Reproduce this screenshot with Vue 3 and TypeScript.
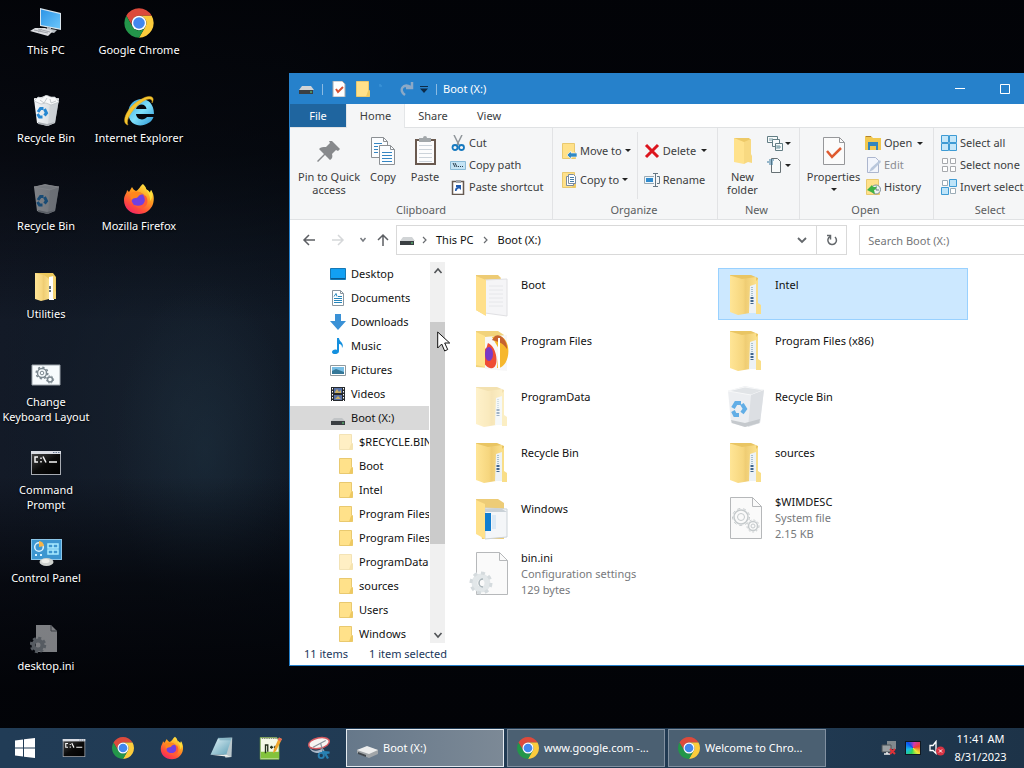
<script setup lang="ts">
import { ref } from 'vue'

interface DesktopItem { icon: string; label: string; dim?: boolean }
interface NavItem { icon: string; label: string; child?: boolean; faded?: boolean; current?: boolean }
interface FileItem { icon: string; name: string; meta?: string[]; faded?: boolean }

const desktopItems: DesktopItem[] = [
  { icon: 'pc', label: 'This PC' },
  { icon: 'bin-full', label: 'Recycle Bin' },
  { icon: 'bin', label: 'Recycle Bin', dim: true },
  { icon: 'folder-small', label: 'Utilities' },
  { icon: 'batch', label: 'Change\nKeyboard Layout' },
  { icon: 'cmd', label: 'Command\nPrompt' },
  { icon: 'control', label: 'Control Panel' },
  { icon: 'ini', label: 'desktop.ini', dim: true },
  { icon: 'chrome', label: 'Google Chrome' },
  { icon: 'ie', label: 'Internet Explorer' },
  { icon: 'firefox', label: 'Mozilla Firefox' },
]

const navItems: NavItem[] = [
  { icon: 'n-desktop', label: 'Desktop' },
  { icon: 'n-docs', label: 'Documents' },
  { icon: 'n-down', label: 'Downloads' },
  { icon: 'n-music', label: 'Music' },
  { icon: 'n-pics', label: 'Pictures' },
  { icon: 'n-video', label: 'Videos' },
  { icon: 'drive-nav', label: 'Boot (X:)', current: true },
  { icon: 'n-folder', label: '$RECYCLE.BIN', child: true, faded: true },
  { icon: 'n-folder', label: 'Boot', child: true },
  { icon: 'n-folder', label: 'Intel', child: true },
  { icon: 'n-folder', label: 'Program Files', child: true },
  { icon: 'n-folder', label: 'Program Files (x86)', child: true },
  { icon: 'n-folder', label: 'ProgramData', child: true, faded: true },
  { icon: 'n-folder', label: 'sources', child: true },
  { icon: 'n-folder', label: 'Users', child: true },
  { icon: 'n-folder', label: 'Windows', child: true },
]

const files: FileItem[] = [
  { icon: 'f-open', name: 'Boot' },
  { icon: 'f-full', name: 'Intel' },
  { icon: 'f-firefox', name: 'Program Files' },
  { icon: 'f-full', name: 'Program Files (x86)' },
  { icon: 'f-full', name: 'ProgramData', faded: true },
  { icon: 'bin', name: 'Recycle Bin' },
  { icon: 'f-full', name: 'Recycle Bin' },
  { icon: 'f-full', name: 'sources' },
  { icon: 'f-win', name: 'Windows' },
  { icon: 'f-sys', name: '$WIMDESC', meta: ['System file', '2.15 KB'] },
  { icon: 'f-ini', name: 'bin.ini', meta: ['Configuration settings', '129 bytes'] },
]

const pinned = [
  { icon: 'cmd', label: 'Command Prompt' },
  { icon: 'chrome', label: 'Google Chrome' },
  { icon: 'firefox', label: 'Mozilla Firefox' },
  { icon: 'notepad', label: 'Notepad' },
  { icon: 'notepadpp', label: 'Text editor' },
  { icon: 'snip', label: 'Snipping tool' },
]

const tasks = [
  { icon: 'drive-3d', label: 'Boot (X:)' },
  { icon: 'chrome', label: 'www.google.com -...' },
  { icon: 'chrome', label: 'Welcome to Chro...' },
]

const tabs = ['Home', 'Share', 'View']
const activeTab = ref('Home')
const selected = ref(1)
const activeTask = ref(0)
const query = ref('')
</script>

<template>
  <div class="screen">
    <svg class="defs" aria-hidden="true">
      <defs>
        <linearGradient id="g-screen" x1="0" y1="0" x2="1" y2="1"><stop offset="0" stop-color="#2c94e6" /><stop offset="1" stop-color="#6cc6fb" /></linearGradient>
        <linearGradient id="g-fire" x1=".8" y1="0" x2=".2" y2="1"><stop offset="0" stop-color="#fff04a" /><stop offset=".4" stop-color="#ff9a1f" /><stop offset=".75" stop-color="#ff4a3d" /><stop offset="1" stop-color="#f0206c" /></linearGradient>
        <linearGradient id="g-fold" x1="0" y1="0" x2="1" y2="0"><stop offset="0" stop-color="#ffe596" /><stop offset=".5" stop-color="#f6d67e" /><stop offset=".6" stop-color="#efcd74" /><stop offset="1" stop-color="#fbe08c" /></linearGradient>
        <linearGradient id="g-ie" x1="0" y1="0" x2="1" y2="1"><stop offset="0" stop-color="#2e9fe0" /><stop offset=".5" stop-color="#7fe0fa" /><stop offset="1" stop-color="#2a94d4" /></linearGradient>
        <linearGradient id="g-bin" x1="0" y1="0" x2="1" y2="0"><stop offset="0" stop-color="#f4f6f8" /><stop offset="1" stop-color="#cfd4d9" /></linearGradient>
        <linearGradient id="g-cmd" x1="0" y1="0" x2="1" y2="1"><stop offset="0" stop-color="#444" /><stop offset=".5" stop-color="#0a0a0a" /><stop offset="1" stop-color="#000" /></linearGradient>
        <linearGradient id="g-note" x1="0" y1="0" x2="1" y2="1"><stop offset="0" stop-color="#e2f2f6" /><stop offset="1" stop-color="#5d9fb6" /></linearGradient>
      </defs>
      <symbol id="pc" viewBox="0 0 32 32">
        <path d="M10 1 31 6v17l-21-4z" fill="#d8e4ec" /><path d="M11 2.500 30 7v14.500L11 18z" fill="url(#g-screen)" />
        <path d="M17 20l4 1v1l6 1-3 3-10-2 3-2z" fill="#b9bec4" /><path d="M5 21l10 0 8 3-5 5L0 24z" fill="#dcdde1" /><path d="M4 23l14 3m-10-4 12 3m-8-3-4 3" stroke="#a2a5ab" />
      </symbol>
      <symbol id="bin" viewBox="0 0 32 32">
        <path d="M4 4 15 1l14 3-4 24-8 3L7 28z" fill="url(#g-bin)" /><path d="M4 4 15 2l14 2-9 3z" fill="#dfe3e6" stroke="#f7f8f9" />
        <path d="M20 7 29 4l-4 24-7 3z" fill="#c6cbd0" opacity=".65" /><path d="M8 27l9 2 8-2-7 4-10-2z" fill="#a8adb2" />
        <g fill="none" stroke="#2587d2" stroke-width="3"><path d="m8 17 2.500-3.500 3 0" /><path d="m14.500 14 2 4-2 2.500" /><path d="m12.500 22h-3L7.500 19" /></g>
      </symbol>
      <symbol id="bin-full" viewBox="0 0 32 32">
        <use href="#bin" /><path d="m4 6 4-4 4 1 4-3 5 2 4 0 4 5-8 3-5-2-5 1z" fill="#f8f9fa" stroke="#b8bdc1" stroke-width=".7" /><path d="m10 5 4 3 3-5m3 1 1 4 5-2" stroke="#aeb3b8" fill="none" stroke-width=".7" />
      </symbol>
      <symbol id="bin-large" viewBox="0 0 48 48">
        <path d="M6 9 23 4l19 4-4 33-15 4-14-4z" fill="#eceef1" /><path d="M6 9 23 5l19 3-13 5z" fill="#e1e4e7" stroke="#f7f8f9" /><path d="M29 13 42 8l-4 33-12 4z" fill="#dcdfe3" /><path d="M9 38l14 3 15-4-1 4-14 4-13-4z" fill="#c5c9cd" />
        <g fill="none" stroke="#62aee6" stroke-width="4"><path d="m11 26 3-5 5 0" /><path d="m20 22 3 5-3 4" /><path d="m17 33h-4l-2-4" /></g>
      </symbol>
      <symbol id="folder-small" viewBox="0 0 32 32">
        <path d="M5 2h18l3 4v16H9z" fill="#edc95c" /><path d="M5 2 14 4l5 4v20l-8 2-6-2z" fill="url(#g-fold)" /><path d="M19 6l5-1v24h-5z" fill="#fff" /><path d="M20 15v3m0 1v2" stroke="#62727e" stroke-width="2" /><path d="M23 5h2v15l1 1v7h-3z" fill="#f5d475" />
      </symbol>
      <symbol id="batch" viewBox="0 0 32 32">
        <path d="M2 6h28v20H2z" fill="#f7fbfd" stroke="#9ca4ab" /><g fill="none" stroke="#7c8890"><circle cx="12" cy="14" r="4.500" stroke-width="1.500" /><circle cx="12" cy="14" r="5.800" stroke-dasharray="2.200 2.300" stroke-width="1.500" /><circle cx="12" cy="14" r="1.800" /><circle cx="20" cy="20.500" r="2.500" stroke-width="1.500" /><circle cx="20" cy="20.500" r="3.600" stroke-dasharray="1.600 1.400" /></g>
      </symbol>
      <symbol id="cmd" viewBox="0 0 32 32">
        <path d="M1 4h30v24H1z" fill="#a7abb2" /><path d="M2 7h28v20H2z" fill="url(#g-cmd)" /><path d="M1 4h30v3H1z" fill="#d9dce3" /><path d="M23 5.500h7" stroke="#63758d" stroke-dasharray="1.500 1" />
        <path d="M8 10H5v5h3M11 10.500v1.500m0 2v1.500M13 9.500l3 6M19 15h8" fill="none" stroke="#f6f6f6" stroke-width="1.500" />
      </symbol>
      <symbol id="control" viewBox="0 0 32 32">
        <path d="M1 4h31v21H1z" fill="#8bc5e8" /><path d="M2 5h29v19H2z" fill="#3d96d0" /><circle cx="9" cy="12" r="4.300" fill="none" stroke="#d8f0ff" stroke-width="1.500" /><path d="M9 12V6a6 6 0 0 1 5 5z" fill="#f6b447" /><path d="M18 9h10v4H18zM18 15h10v4H18zM23 9v4m0 2v4" fill="none" stroke="#a9ebff" stroke-width="1.500" /><path d="M5 20h2m3 0h2" stroke="#d7f2ff" stroke-width="2" /><ellipse cx="16.500" cy="27" rx="7" ry="4" fill="#cfd2cf" /><ellipse cx="15.500" cy="26" rx="4" ry="2" fill="#eff0eb" />
      </symbol>
      <symbol id="ini" viewBox="0 0 32 32">
        <path d="M6 2h15l6 6v21H6z" fill="#f4f6f8" /><path d="M21 2v6h6" fill="none" stroke="#72777d" /><circle cx="8" cy="22" r="4.500" fill="none" stroke="#a7b0b7" stroke-width="4" /><circle cx="8" cy="22" r="7" fill="none" stroke="#a7b0b7" stroke-width="2.500" stroke-dasharray="3 2.500" />
      </symbol>
      <symbol id="chrome" viewBox="0 0 48 48">
        <path d="M4.950 13A22 22 0 0 1 43.050 13H24a11 11 0 0 0-9.530 16.500z" fill="#dc4a3c" /><path d="M43.050 13A22 22 0 0 1 24 46l9.530-16.500A11 11 0 0 0 24 13z" fill="#fccc3c" /><path d="M24 46A22 22 0 0 1 4.950 13l9.520 16.500a11 11 0 0 0 19.060 0z" fill="#23964a" /><circle cx="24" cy="24" r="11" fill="#fff" /><circle cx="24" cy="24" r="8.700" fill="#4287ee" />
      </symbol>
      <symbol id="ie" viewBox="0 0 32 32">
        <path d="M31 19H13c.5 6 8 7 11 3h6.500c-3 10-23 13-25-2C3 1 31-3 31 19zM13 14h10.500c-.5-6-9-6-10.500 0z" fill="url(#g-ie)" /><path d="M5 30C-3 28 4 12 17 5c9-6 16-4 12 3 1-5-4-5-10-1C10 13 2 25 5 30z" fill="#f5c630" stroke="#dfa71c" stroke-width=".5" />
      </symbol>
      <symbol id="firefox" viewBox="0 0 32 32">
        <path d="M20 1c2 2 3 3.500 3.500 6 2.500 1 3.500 3 3.500 3l1-3c3 4 3.500 9 2 14-2 6-7.500 10-14 10C7 31 1 25 1 17c0-5 3-7 3-10l2 2 3-5c1 2 2 3 4 4 3-1 4-5 7-7z" fill="url(#g-fire)" /><circle cx="15.500" cy="16.500" r="7" fill="#7140e1" /><path d="M8 10c5-3 10-1 13 2-3-1-5 0-6 2-2 2-6 0-6 4-2-3-2-6-1-8z" fill="#ff861d" /><path d="M20 12c5 7-1 13-9 10 8 8 17 0 12-9z" fill="#ff5a38" /><path d="M21 2c1 5 7 9 6 16 4-5 2-9 1-11l-1 3c-1-3-3-3-4-4z" fill="#ffdf3a" />
      </symbol>
      <symbol id="notepad" viewBox="0 0 32 32">
        <path d="m12 3 19-1-1 26-8 1z" fill="#b9c7cc" /><path d="M12 3h18l-7 22H2z" fill="url(#g-note)" /><path d="m23 25 6 3-27-3z" fill="#f1f1ed" /><path d="M12 3h18M14 5h15" stroke="#6ba3b6" />
      </symbol>
      <symbol id="notepadpp" viewBox="0 0 32 32">
        <path d="M3 2h22l3 4v25H3z" fill="#f5f9e7" stroke="#77ad3b" /><path d="M4 21h24v9H4z" fill="#83c33c" /><path d="M5 3h20" stroke="#889078" stroke-width="2" stroke-dasharray="2 1" /><path d="M10 23V11m0 1h3v9m3-6h4m1 0h4m-7-2v4m5-4v4" fill="none" stroke="#24301b" stroke-width="1.800" /><path d="m28 2 4 2-8 16-4 3 1-5z" fill="#f0a62b" /><path d="m28 2 4 2-2 3-4-2z" fill="#e7665a" />
      </symbol>
      <symbol id="snip" viewBox="0 0 32 32">
        <path d="M3 15c4 6 12 6 18 1l3 5c-8 3-18 3-21-6z" fill="#aab6c6" /><ellipse cx="16" cy="9.500" rx="14" ry="7" fill="#f7f5f2" stroke="#d4585f" stroke-width="2" transform="rotate(-12 16 9.500)" /><path d="M8 15 25 6M18 9l3 11" stroke="#8a929a" stroke-width="1.500" /><circle cx="19" cy="26" r="3.500" fill="none" stroke="#2880b2" stroke-width="2.500" /><path d="m20 21 10 1-6 1 4 7" fill="none" stroke="#2880b2" stroke-width="3" />
      </symbol>
      <symbol id="drive-3d" viewBox="0 0 24 24">
        <path d="m2 14 10-3 11 3v4l-9 4-12-5z" fill="#a1a5a8" /><path d="m2 14 10-4 11 4-9 4z" fill="#eceded" /><path d="m3 16 8 3v2l-8-3z" fill="#41474c" />
      </symbol>
      <symbol id="drive" viewBox="0 0 16 16"><path d="M4 5h9l3 4H1z" fill="#d1d4d6" /><path d="M1 9h14v4H1z" fill="#3b3f43" /><path d="M12 11h2" stroke="#62df7e" /></symbol>
      <symbol id="drive-nav" viewBox="0 0 16 16"><path d="M4 8h8l3 3H1z" fill="#c1c4c6" /><path d="M1 11h14v4H1z" fill="#3b3f43" /><path d="M12 13h2" stroke="#62df7e" /></symbol>
      <symbol id="check-page" viewBox="0 0 16 16"><path d="M2 0h9l3 3v13H2z" fill="#fff" stroke="#a8a9ad" /><path d="m5 8 2 3 5-5" fill="none" stroke="#d85132" stroke-width="2" /></symbol>
      <symbol id="n-folder" viewBox="0 0 16 16"><path d="M1.500.500h12V9l1 1v5.500h-13z" fill="#ffe18a" stroke="#e9c96f" /><path d="M13 10l1.500-1v6.500H11z" fill="#eec961" /></symbol>
      <symbol id="n-desktop" viewBox="0 0 16 16"><path d="M.5 2.500h15v11H.5z" fill="#12a0f3" stroke="#1678b4" /><path d="M1 12.500h14" stroke="#0b5a90" /></symbol>
      <symbol id="n-docs" viewBox="0 0 16 16"><path d="M2.500.500h8l3 3v12h-11z" fill="#fff" stroke="#8a969f" /><path d="M4 8.500h8M4 10.500h8M4 12.500h8M8 6.500h4M4 6.500l2-3 1 3" fill="none" stroke="#2786bb" /><path d="M10.500.500v3h3" fill="none" stroke="#8a969f" /></symbol>
      <symbol id="n-down" viewBox="0 0 16 16"><path d="M5 0h6v7h5l-8 9-8-9h5z" fill="#3a91d6" /></symbol>
      <symbol id="n-music" viewBox="0 0 16 16"><path d="M7 0h2c0 4 6 5 3 10 0-3-1-4-3-4v7c0 4-7 4-7 1 0-2 3-3 5-2z" fill="#1490df" /></symbol>
      <symbol id="n-pics" viewBox="0 0 16 16"><path d="M.5 3.500h15v10H.5z" fill="#fff" stroke="#8f999e" /><path d="M2 5h12v7H2z" fill="#78bee5" /><path d="m2 9 4-2 8 3v2H2z" fill="#347798" /></symbol>
      <symbol id="n-video" viewBox="0 0 16 16"><path d="M1 1h14v14H1z" fill="#25292d" /><path d="M4 2h8v5H4zM4 9h8v5H4z" fill="#5972a7" /><path d="m5 6 2-3 2 3 2-2v3H5zm0 7 3-3 3 3z" fill="#c9b067" /><path d="M2.500 2v13m11-13v13" stroke="#fff" stroke-dasharray="1.500 1.500" /></symbol>
      <symbol id="f-full" viewBox="0 0 48 48"><path d="M8 5h21l7 3v30H9z" fill="#e9c563" /><path d="M8 5.500 20 9l14-2v35l-18 3-8-3z" fill="url(#g-fold)" /><path d="m28 16 6-2v29h-7z" fill="#edf2f5" /><path d="M30 17v12" stroke="#a8c0cf" stroke-width="2" stroke-dasharray="1 1" /><path d="M30 27v7" stroke="#42678f" stroke-width="3" stroke-dasharray="2 1" /><path d="M34 11l2-2v24l3 2v9h-5z" fill="#f9de88" /></symbol>
      <symbol id="f-open" viewBox="0 0 48 48"><path d="M8 5h22l3 3-16 37-9-5z" fill="#edcb74" /><path d="m17 10 22-1v37l-22-3z" fill="#f5f5f7" stroke="#e0e0e3" /><path d="M21 16h14m-14 4h14m-14 4h14m-14 4h14m-14 4h14m-14 4h14" stroke="#e6e7ea" /><path d="M8 6l10 4v36L8 40z" fill="#ffe08b" /></symbol>
      <symbol id="f-firefox" viewBox="0 0 48 48"><path d="M8 5h22l6 4v34l-28-2z" fill="#f1d27a" /><path d="m17 11 22-2v36l-22-2z" fill="#f7f7f7" /><path d="M24 11c22-8 20 32 5 31l2-19z" fill="#f6b72d" /><path d="M27 10c8-4 13 9 12 13-4-7-12-8-15-9z" fill="#c66230" /><path d="M18 22c1 0 1-3 2-5 10 4 12 28 2 25-8-2-9-15-4-20z" fill="#ee4c34" /><ellipse cx="21" cy="28" rx="4" ry="7" fill="#793ac7" /><path d="M8 6l9 4v31l-9-2z" fill="#ffe38d" /><path d="M31 12v31" stroke="#fff" stroke-width="2" /></symbol>
      <symbol id="f-win" viewBox="0 0 48 48"><path d="M8 5h22l6 4v36H14z" fill="#edcc77" /><path d="m17 14 22 1v28l-22 2z" fill="#f4f6f8" stroke="#ccd3d8" /><path d="M17 15h17l5 3H17z" fill="#c9d1d7" /><path d="M17 19h6v18h-6z" fill="#127ed0" /><path d="M24 21h4v14h-4z" fill="#dbe9f5" /><path d="M8 6l9 4v35l-9-5z" fill="#ffe18b" /></symbol>
      <symbol id="f-sys" viewBox="0 0 48 48"><path d="M8.500 3.500h22l9 9v32h-31z" fill="#fafafa" stroke="#b6b8ba" /><path d="M30.500 3.500v9h9" fill="none" stroke="#b6b8ba" /><g fill="none" stroke="#c5cacc"><circle cx="19" cy="23" r="7" stroke-width="1.500" /><circle cx="19" cy="23" r="3.500" /><circle cx="19" cy="23" r="8.500" stroke-dasharray="3 3" /><circle cx="31" cy="32" r="4.500" stroke-width="1.500" /><circle cx="31" cy="32" r="2" /><circle cx="31" cy="32" r="6" stroke-dasharray="2 2" /></g></symbol>
      <symbol id="f-ini" viewBox="0 0 48 48"><path d="M8.500 2.500h23l8 8v34h-31z" fill="#fafafa" stroke="#b6b8ba" /><path d="M31.500 2.500v8h8" fill="none" stroke="#b6b8ba" /><circle cx="13" cy="33" r="6.500" fill="none" stroke="#e2e7e9" stroke-width="6" /><circle cx="13" cy="33" r="10" fill="none" stroke="#d5dbde" stroke-width="3" stroke-dasharray="4 3.800" /><path d="M15 29a4 4 0 1 0 0 8" fill="none" stroke="#a9b4b9" stroke-width="1.500" /></symbol>
      <symbol id="pin" viewBox="0 0 32 32"><path d="m19 5 8 8-2 2-2-1-4 4c1 3 0 5-2 6l-5-5-7 7-1-1 7-7-5-5c2-2 4-2 7-2l4-4-1-2z" fill="#87898c" /></symbol>
      <symbol id="copy" viewBox="0 0 32 32"><g fill="#fbfdff" stroke="#8c9094"><path d="M4.500 1.500h12l4 4v16h-16z" /><path d="M12.500 9.500h11l4 4v15h-15z" /><path d="M16.500 1.500v4h4M23.500 9.500v4h4" fill="none" /></g><path d="M7 7.500h8M7 10.500h4M7 13.500h4M7 16.500h4M15 16.500h10M15 19.500h10M15 22.500h10M15 25.500h10" stroke="#3485c2" /></symbol>
      <symbol id="paste" viewBox="0 0 32 32"><path d="M7 4h19v24H7z" fill="#fcfcfd" stroke="#69594f" stroke-width="2" /><path d="M10 9.500h13m-13 4h13m-13 4h13m-13 4h13m-13 4h13" stroke="#ccd3da" /><path d="M10 2h4a2 2 0 0 1 4 0h4v4H10z" fill="#a2a7aa" /></symbol>
      <symbol id="cut" viewBox="0 0 16 16"><path d="m4 0 5 10M12 0 7 10" stroke="#90969b" stroke-width="1.500" /><g fill="none" stroke="#1679bf" stroke-width="1.800"><circle cx="5" cy="12.500" r="2.500" /><circle cx="11.500" cy="12.500" r="2.500" /></g></symbol>
      <symbol id="copypath" viewBox="0 0 16 16"><path d="M.5 4.500h15v8H.5z" fill="#c4e3f4" stroke="#8abbd7" /><path d="m3 6 2 4m0-4 2 4m1-.5h1m1 0h1m1 0h1" fill="none" stroke="#273b4b" /></symbol>
      <symbol id="pasteshort" viewBox="0 0 16 16"><path d="M2.500 2.500h11v13h-11z" fill="#fff" stroke="#665a51" stroke-width="1.500" /><path d="M6 1h5v3H6z" fill="#a2a4a7" /><path d="M5 12c0-3 1-4 3-4H6V6h5v5L9.500 9.500C8 9.500 7 10 6.500 12z" fill="#205bb0" /></symbol>
      <symbol id="moveto" viewBox="0 0 16 16"><use href="#n-folder" /><path d="m6 12 4-4v2h6v4h-6v2z" fill="#3289c4" stroke="#fff" stroke-width=".6" /></symbol>
      <symbol id="copyto" viewBox="0 0 16 16"><use href="#n-folder" /><path d="M5.500 4.500h5l2 2v7h-7z" fill="#fff" stroke="#7a8ba0" /><path d="M7.500 2.500h5l2 2v7h-7z" fill="#fff" stroke="#7a8ba0" /><path d="M9 5.500h4m-4 2h4m-4 2h4" stroke="#467da8" /></symbol>
      <symbol id="delete" viewBox="0 0 16 16"><path d="m2 2 12 12M14 2 2 14" stroke="#dc151e" stroke-width="3" /></symbol>
      <symbol id="rename" viewBox="0 0 16 16"><path d="M10 4.500H.500v7H10" fill="#eff7fc" stroke="#9aa9b3" /><path d="M2 6h7v4H2z" fill="#318bce" /><path d="M13 4.500h2.500v7H13M9 1.500h5m-5 13h5m-2.500-13v13" fill="none" stroke="#657683" /></symbol>
      <symbol id="new-folder" viewBox="0 0 32 32"><path d="M7 2h15l2 2v22H9z" fill="#edc967" /><path d="M7 2l10 4v22L7 26z" fill="#ffe28c" /><path d="m17 6 7-3v15l1 2v7l-4-1-4 2z" fill="#f8d981" /></symbol>
      <symbol id="newitem" viewBox="0 0 16 16"><g fill="#f8fbfb" stroke="#627d84"><path d="M.5 1.500h10v6H.5z" /><path d="M5.500 4.500h7v7h-7z" /><path d="M8.500 8.500h7v7h-7z" /></g><path d="M3 3v3m2-3v3m5 4v4m2-4v4m-2-2h4" stroke="#759aa4" /></symbol>
      <symbol id="easy" viewBox="0 0 16 16"><path d="M4.500 1.500h6l3 3v11h-9z" fill="#f8fafa" stroke="#667074" /><path d="M2 3h5M0 5h6M2 7h4" stroke="#38789d" /></symbol>
      <symbol id="properties" viewBox="0 0 32 32"><path d="M5.500 1.500h16l5 5v22h-21z" fill="#fbfbfb" stroke="#96979a" /><path d="M21.500 1.500v5h5" fill="none" stroke="#96979a" /><path d="m9 15 5 6 9-9" fill="none" stroke="#df5b30" stroke-width="2.500" /></symbol>
      <symbol id="open" viewBox="0 0 16 16"><path d="M0 1h6l2 2h8v12H0z" fill="#f1c84f" /><path d="M1 1h5v1H1z" fill="#b1812f" /><path d="M3 7h10v8h-2v-4H5v4H3z" fill="#3285bc" /></symbol>
      <symbol id="edit" viewBox="0 0 16 16"><path d="M2.500.500h8l3 3v12h-11z" fill="#f2f5fc" stroke="#acb6ce" /><path d="m4 15 2-4L15 3l1 2-8 8z" fill="#b9c7dc" /></symbol>
      <symbol id="history" viewBox="0 0 16 16"><use href="#n-folder" /><circle cx="11" cy="10.500" r="4.500" fill="#eef1f2" stroke="#7f8f95" /><path d="M11 8v3h3" fill="none" stroke="#6b8187" /><path d="M2 11 7 6l1 2c2 0 3 0 4-1-1 4-3 4-3 4l1 4z" fill="#3fb144" /></symbol>
      <symbol id="select-all" viewBox="0 0 16 16"><path d="M.5.500h7v7h-7zm8 0h7v7h-7zm-8 8h7v7h-7zm8 0h7v7h-7z" fill="#c5e7f9" stroke="#3e9bd4" /></symbol>
      <symbol id="select-none" viewBox="0 0 16 16"><path d="M1.500 1.500h5v5h-5zm8 0h5v5h-5zm-8 8h5v5h-5zm8 0h5v5h-5z" fill="#fff" stroke="#a6a9ad" /></symbol>
      <symbol id="invert" viewBox="0 0 16 16"><path d="M1.500 1.500h5v5h-5zm8 8h5v5h-5z" fill="#fff" stroke="#9bacb7" /><path d="M8.500.500h7v7h-7zm-8 8h7v7h-7z" fill="#bee4f9" stroke="#3e9bd4" /></symbol>
    </svg>

    <main class="desktop">
      <ul class="shortcuts">
        <li v-for="(d, i) in desktopItems" :key="i">
          <button class="shortcut">
            <svg :class="{ dim: d.dim }"><use :href="'#' + d.icon" /></svg>
            <span>{{ d.label }}</span>
          </button>
        </li>
      </ul>

      <section class="window" aria-label="Boot (X:)">
        <header class="titlebar">
          <svg class="s16"><use href="#drive" /></svg>
          <i class="bar"></i>
          <button class="quick" aria-label="Properties"><svg class="s16"><use href="#check-page" /></svg></button>
          <button class="quick" aria-label="New folder"><svg class="s16"><use href="#n-folder" /></svg></button>
          <button class="quick undo" aria-label="Undo"><svg class="s16" viewBox="0 0 16 16"><path d="M3 3v2h2" fill="none" stroke="#3a92d8" stroke-width="1.500" /></svg></button>
          <button class="quick redo" aria-label="Redo"><svg class="s16" viewBox="0 0 16 16"><path d="M6 14C-1 9 4 2 12 6M13 1v6H7" fill="none" stroke="#8ba9c7" stroke-width="2.500" /></svg></button>
          <button class="quick more" aria-label="Customize toolbar"><svg viewBox="0 0 8 8"><path d="M0 1.500h8" stroke="#0d2b48" /><path d="M0 3.500h8L4 8z" fill="#0d2b48" /></svg></button>
          <i class="bar"></i>
          <h1>Boot (X:)</h1>
          <button class="caption" aria-label="Minimize"><svg viewBox="0 0 10 10"><path d="M0 4.500h10" stroke="#fff" /></svg></button>
          <button class="caption" aria-label="Maximize"><svg viewBox="0 0 10 10"><path d="M.5.500h9v9h-9z" fill="none" stroke="#fff" /></svg></button>
        </header>

        <nav class="tabs">
          <button class="file">File</button>
          <button v-for="t in tabs" :key="t" :class="{ active: t === activeTab }" @click="activeTab = t">{{ t }}</button>
        </nav>

        <div class="ribbon">
          <div class="group clipboard">
            <div class="tools">
              <button class="big pin"><svg><use href="#pin" /></svg><span>Pin to Quick access</span></button>
              <button class="big copy"><svg><use href="#copy" /></svg><span>Copy</span></button>
              <button class="big paste"><svg><use href="#paste" /></svg><span>Paste</span></button>
              <div class="stack">
                <button><svg><use href="#cut" /></svg>Cut</button>
                <button><svg><use href="#copypath" /></svg>Copy path</button>
                <button><svg><use href="#pasteshort" /></svg>Paste shortcut</button>
              </div>
            </div>
            <p>Clipboard</p>
          </div>
          <div class="group organize">
            <div class="tools">
              <div class="stack roomy">
                <button><svg><use href="#moveto" /></svg>Move to<i class="caret"></i></button>
                <button><svg><use href="#copyto" /></svg>Copy to<i class="caret"></i></button>
              </div>
              <div class="stack roomy split">
                <button><svg><use href="#delete" /></svg>Delete<i class="caret wide"></i></button>
                <button><svg><use href="#rename" /></svg>Rename</button>
              </div>
            </div>
            <p>Organize</p>
          </div>
          <div class="group new">
            <div class="tools">
              <button class="big newf"><svg><use href="#new-folder" /></svg><span>New folder</span></button>
              <div class="stack tight">
                <button aria-label="New item"><svg><use href="#newitem" /></svg><i class="caret"></i></button>
                <button aria-label="Easy access"><svg><use href="#easy" /></svg><i class="caret"></i></button>
              </div>
            </div>
            <p>New</p>
          </div>
          <div class="group open">
            <div class="tools">
              <button class="big props"><svg><use href="#properties" /></svg><span>Properties</span><i class="caret"></i></button>
              <div class="stack">
                <button><svg><use href="#open" /></svg>Open<i class="caret wide"></i></button>
                <button class="off" disabled><svg><use href="#edit" /></svg>Edit</button>
                <button><svg><use href="#history" /></svg>History</button>
              </div>
            </div>
            <p>Open</p>
          </div>
          <div class="group select">
            <div class="tools">
              <div class="stack">
                <button><svg><use href="#select-all" /></svg>Select all</button>
                <button><svg><use href="#select-none" /></svg>Select none</button>
                <button><svg><use href="#invert" /></svg>Invert selection</button>
              </div>
            </div>
            <p>Select</p>
          </div>
        </div>

        <div class="address">
          <button aria-label="Back"><svg class="s16" viewBox="0 0 16 16"><path d="M14 8H3m5-5L3 8l5 5" fill="none" stroke="#5c5f63" stroke-width="1.500" /></svg></button>
          <button aria-label="Forward"><svg class="s16" viewBox="0 0 16 16"><path d="M2 8h11M8 3l5 5-5 5" fill="none" stroke="#d5d7d9" stroke-width="1.500" /></svg></button>
          <button class="narrow" aria-label="Recent"><svg viewBox="0 0 8 8"><path d="m1.500 2 2.500 3L6.500 2" fill="none" stroke="#777b80" stroke-width="1.500" /></svg></button>
          <button class="up" aria-label="Up"><svg class="s16" viewBox="0 0 16 16"><path d="M8 14V3M3 8l5-5 5 5" fill="none" stroke="#5c5f63" stroke-width="1.500" /></svg></button>
          <div class="path">
            <svg class="s16"><use href="#drive" /></svg>
            <svg class="sep" viewBox="0 0 8 8"><path d="m2 1 3 3-3 3" fill="none" stroke="#696c70" stroke-width="1.200" /></svg>
            <a href="#">This PC</a>
            <svg class="sep second" viewBox="0 0 8 8"><path d="m2 1 3 3-3 3" fill="none" stroke="#696c70" stroke-width="1.200" /></svg>
            <a href="#">Boot (X:)</a>
            <button class="drop" aria-label="Previous locations"><svg viewBox="0 0 10 10"><path d="m1 3 4 4 4-4" fill="none" stroke="#63676b" stroke-width="1.800" /></svg></button>
            <button class="reload" aria-label="Refresh"><svg viewBox="0 0 14 14"><path d="M5 3.500A4.300 4.300 0 1 0 10 4" fill="none" stroke="#63676b" stroke-width="1.500" /><path d="M5.500 6.500V2.500H2" fill="none" stroke="#63676b" stroke-width="1.500" /></svg></button>
          </div>
          <input v-model="query" class="search" type="search" aria-label="Search Boot (X:)" placeholder="Search Boot (X:)">
        </div>

        <div class="panes">
          <nav class="tree">
            <ul>
              <li v-for="(n, i) in navItems" :key="i">
                <a href="#" :class="{ child: n.child, current: n.current }">
                  <svg class="s16" :class="{ faded: n.faded }"><use :href="'#' + n.icon" /></svg>{{ n.label }}
                </a>
              </li>
            </ul>
          </nav>
          <div class="scroll">
            <button aria-label="Scroll up"><svg viewBox="0 0 10 10"><path d="m1.500 7 3.500-4 3.500 4" fill="none" stroke="#505356" stroke-width="1.600" /></svg></button>
            <div class="track"><div class="thumb"></div></div>
            <button aria-label="Scroll down"><svg viewBox="0 0 10 10"><path d="m1.500 3 3.500 4 3.500-4" fill="none" stroke="#505356" stroke-width="1.600" /></svg></button>
          </div>
          <div class="files">
            <button v-for="(f, i) in files" :key="i" class="item" :class="{ chosen: i === selected }" @click="selected = i">
              <svg :class="{ faded: f.faded }"><use :href="f.icon === 'bin' ? '#bin-large' : '#' + f.icon" /></svg>
              <span class="info"><span>{{ f.name }}</span><small v-for="m in f.meta" :key="m">{{ m }}</small></span>
            </button>
          </div>
        </div>

        <footer class="status"><span>{{ files.length }} items</span><span>1 item selected</span></footer>
      </section>

      <svg class="pointer" viewBox="0 0 13 21" aria-hidden="true"><path d="M.7 1v16l4-4 3 7 3-1.500-3-6.500h5z" fill="#fff" stroke="#111" /></svg>
    </main>

    <footer class="taskbar">
      <button class="start" aria-label="Start"><svg viewBox="0 0 20 20"><path d="m0 2.500 8-1v8H0zm9-1.200L20 0v9.500H9zM0 10.500h8v8l-8-1zm9 0h11V20L9 18.700z" fill="#fff" /></svg></button>
      <button v-for="p in pinned" :key="p.label" class="app" :aria-label="p.label"><svg><use :href="'#' + p.icon" /></svg></button>
      <div class="tasks">
        <button v-for="(t, i) in tasks" :key="t.label" :class="{ active: i === activeTask }" @click="activeTask = i"><svg><use :href="'#' + t.icon" /></svg><span>{{ t.label }}</span></button>
      </div>
      <div class="tray">
        <svg viewBox="0 0 16 16"><path d="M6 1h9v8H6z" fill="#82898e" /><path d="M1 5h9v7H1z" fill="#9ba0a2" stroke="#4d5357" /><path d="M3 14h6M6 12v2" stroke="#eef0f1" stroke-width="1.500" /><path d="m9 9 5 5m0-5-5 5" stroke="#de3238" stroke-width="2" /></svg>
        <i class="palette"></i>
        <svg viewBox="0 0 16 16"><path d="M1 5.500h3l3-4v12l-3-3H1z" fill="none" stroke="#fff" stroke-width="1.300" /><circle cx="11.500" cy="11" r="4.500" fill="#d73343" /><path d="m10 9.500 3 3m0-3-3 3" stroke="#fff" /></svg>
      </div>
      <time><span>11:41 AM</span><span>8/31/2023</span></time>
    </footer>
  </div>
</template>

<style>
html, body { margin: 0; overflow: hidden; }
</style>

<style scoped>
* { box-sizing: border-box; }
.screen {
  display: flex; flex-direction: column; height: 100vh; overflow: hidden;
  font: 11px/16px "Noto Sans", "Open Sans", sans-serif; color: #111;
  background:
    linear-gradient(180deg, rgba(2, 3, 7, .95) 0, rgba(2, 3, 7, .7) 20%, rgba(2, 3, 7, 0) 42%, rgba(2, 3, 7, 0) 62%, rgba(2, 3, 7, .7) 76%, rgba(2, 3, 7, .97) 90%),
    radial-gradient(ellipse 90px 170px at 205px 450px, rgba(32, 54, 70, .4), rgba(32, 54, 70, 0)),
    radial-gradient(ellipse 240px 300px at 180px 410px, rgba(24, 35, 48, .8), rgba(19, 29, 42, .5) 55%, rgba(6, 9, 16, 0)),
    linear-gradient(90deg, #131926, #0d1520 28%, #03060c 40%, #03060c);
}
.defs { position: absolute; width: 0; height: 0; }
button { font: inherit; color: inherit; border: 0; background: none; padding: 0; margin: 0; }
ul { list-style: none; margin: 0; padding: 0; }
a { color: inherit; text-decoration: none; }
svg { display: block; flex: none; }
.s16 { width: 16px; height: 16px; }
.faded { opacity: .5; }
.desktop { position: relative; flex: 1; min-height: 0; }

.shortcuts { display: grid; grid-auto-flow: column; grid-template-rows: repeat(8, 88px); grid-auto-columns: 92px; column-gap: 1px; justify-content: start; }
.shortcut { display: flex; flex-direction: column; align-items: center; gap: 3px; width: 100%; padding-top: 7px; color: #fff; line-height: 15px; text-shadow: 0 1px 2px #000; white-space: pre-line; }
.shortcut svg { width: 32px; height: 32px; }
.shortcut .dim { opacity: .5; }

.window { position: absolute; left: 289px; right: -49px; top: 73px; bottom: 62px; display: flex; flex-direction: column; background: #fff; border: 1px solid #2681cb; }
.titlebar { display: flex; align-items: center; height: 30px; padding: 0 44px 0 8px; gap: 8px; background: #2681cb; color: #fff; flex: none; }
.bar { width: 1px; height: 11px; background: #8bbbe3; }
.titlebar h1 { flex: 1; margin: 0 0 0 -2px; font: inherit; }
.undo, .redo { margin-left: -2px; }
.more { margin: 0 0 0 -3px; }
.more svg { width: 8px; height: 8px; }
.caption { width: 46px; height: 30px; display: grid; place-items: center; }
.caption + .caption { margin-left: -9px; }
.caption svg { width: 10px; height: 10px; }

.tabs { display: flex; height: 23px; flex: none; color: #3b3d40; }
.tabs button { width: 56px; height: 24px; }
.tabs .file { background: #1f659f; color: #fff; height: 23px; }
.tabs .active { width: 59px; background: #f5f6f7; border: solid #e4e6e8; border-width: 0 1px; position: relative; }

.ribbon { display: flex; height: 93px; flex: none; background: #f5f6f7; border: solid #e0e2e4; border-width: 1px 0; color: #3c3d40; }
.group { display: flex; flex-direction: column; justify-content: space-between; padding-top: 4px; border-right: 1px solid #e2e3e5; flex: none; }
.group p { margin: 0; text-align: center; line-height: 18px; color: #5b5d60; }
.clipboard { width: 263px; padding-left: 4px; }
.clipboard p { margin-left: -4px; }
.organize { width: 165px; padding-left: 8px; }
.organize p { margin-left: -10px; }
.new { width: 82px; padding-left: 2px; }
.new p { margin-left: -6px; }
.open { width: 134px; padding-left: 4px; }
.open p { margin-left: -6px; }
.select { width: 113px; padding-left: 7px; }
.select p { margin-left: -7px; }
.tools { display: flex; height: 67px; }
.big { display: flex; flex-direction: column; align-items: center; padding-top: 4px; gap: 2px; line-height: 13px; }
.big svg { width: 32px; height: 32px; }
.pin { width: 70px; }
.copy { width: 38px; }
.paste { width: 46px; }
.newf { width: 45px; }
.newf span { width: 36px; }
.props { width: 59px; }
.props .caret { margin-top: 3px; }
.caret { border: 3px solid transparent; border-top-color: #222; border-bottom: 0; }
.wide { margin-left: 2px; }
.stack { display: flex; flex-direction: column; padding-left: 2px; }
.stack button { display: flex; align-items: center; gap: 3px; height: 22px; white-space: nowrap; }
.stack svg { width: 16px; height: 16px; }
.tight button { gap: 2px; }
.roomy { padding: 4px 0 0; }
.roomy button { height: 29px; }
.split { margin: 0 0 0 6px; padding-left: 6px; border-left: 1px solid #e2e3e5; }
.off { color: #8b8d92; }
.select .stack { padding-left: 0; }

.address { display: flex; align-items: center; height: 42px; flex: none; padding: 0 12px 2px 11px; }
.address > button { width: 29px; display: grid; justify-items: start; }
.address > .narrow { width: 16px; }
.address > .narrow svg { width: 8px; height: 8px; }
.address > .up { width: 21px; }
.path { display: flex; align-items: center; flex: 448 1 0; min-width: 0; height: 30px; border: 1px solid #d9d9d9; padding-left: 2px; }
.sep { width: 8px; height: 8px; margin: 0 7px 0 6px; }
.second { margin: 0 8px; }
.drop { margin-left: auto; width: 29px; height: 28px; display: grid; place-items: center; border-right: 1px solid #d9d9d9; }
.drop svg { width: 10px; height: 10px; }
.reload { width: 29px; height: 28px; display: grid; place-items: center; }
.reload svg { width: 14px; height: 14px; }
.search { flex: 183 1 0; min-width: 0; height: 30px; margin-left: 12px; border: 1px solid #d9d9d9; padding: 0 8px; font: inherit; background: #fff; }
.search::placeholder { color: #757679; opacity: 1; }

.panes { display: flex; flex: 1; min-height: 0; }
.tree { width: 139px; overflow: hidden; flex: none; }
.tree a { display: flex; align-items: center; gap: 5px; height: 24px; padding-left: 40px; white-space: nowrap; }
.tree .child { padding-left: 48px; }
.tree .current { background: #d9d9d9; }
.scroll { display: flex; flex-direction: column; width: 15px; margin-left: 1px; flex: none; background: #f0f0f0; }
.scroll button { height: 17px; display: grid; place-items: center; }
.scroll svg { width: 10px; height: 10px; }
.track { flex: 1; display: flex; flex-direction: column; }
.thumb { height: 64%; margin-top: 43px; background: #cbcbcb; }
.files { display: grid; grid-template-columns: 250px 250px; grid-auto-rows: 52px; gap: 4px; padding: 6px 0 0 19px; align-content: start; }
.item { display: flex; align-items: center; gap: 5px; padding-left: 3px; text-align: left; border: 1px solid transparent; }
.item.chosen { background: #cce8ff; border-color: #99d1ff; }
.item svg { width: 48px; height: 48px; }
.info { display: flex; flex-direction: column; min-height: 34px; }
.info small { font-size: 11px; color: #77797c; }
.status { display: flex; gap: 21px; height: 22px; flex: none; padding-left: 14px; line-height: 21px; color: #20365a; }
.pointer { position: absolute; left: 437px; top: 331px; width: 13px; height: 21px; }

.taskbar { display: flex; align-items: stretch; height: 40px; flex: none; background: linear-gradient(90deg, #213c56, #203951 80%, #1d3348); color: #fff; }
.start { width: 49px; display: grid; place-items: center; }
.start svg { width: 20px; height: 20px; }
.app { width: 49px; display: grid; place-items: center; }
.app svg { width: 24px; height: 24px; }
.tasks { display: flex; gap: 3px; flex: 1; padding: 1px 0 1px 3px; }
.tasks button { display: flex; align-items: center; gap: 4px; width: 158px; padding: 0 8px; background: #4b6072; border: 1px solid #8190a0; white-space: nowrap; }
.tasks .active { background: linear-gradient(90deg, #66788a, #7c8996); border-color: #e4eaf0; }
.tasks svg { width: 24px; height: 24px; }
.tray { display: flex; align-items: center; gap: 8px; padding-right: 9px; }
.tray svg { width: 16px; height: 16px; }
.palette { width: 16px; height: 14px; border: 1px solid #101820; background: conic-gradient(from -45deg, #0b53ef, #d339b0, #ef4030, #e9ec34, #2dd55a, #19bce5, #0b53ef); }
time { display: flex; flex-direction: column; justify-content: center; align-items: center; width: 53px; margin-right: 17px; line-height: 18px; }
</style>
